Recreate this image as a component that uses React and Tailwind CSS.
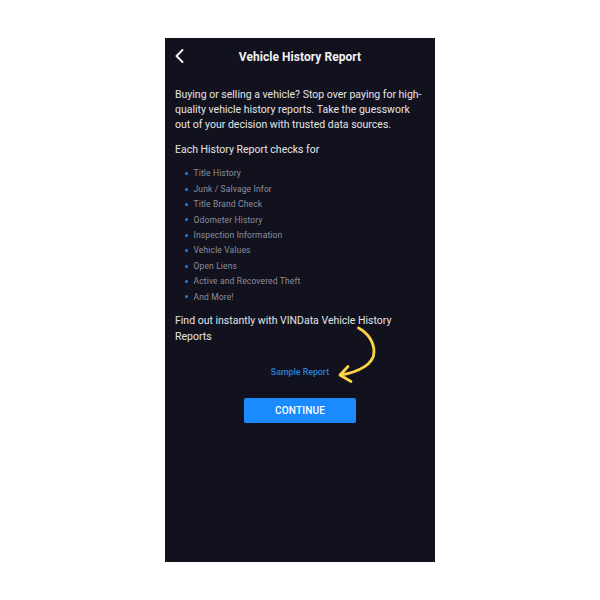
const items = [
  "Title History",
  "Junk / Salvage Infor",
  "Title Brand Check",
  "Odometer History",
  "Inspection Information",
  "Vehicle Values",
  "Open Liens",
  "Active and Recovered Theft",
  "And More!",
];

function App() {
  return (
    <div className="w-[600px] h-[600px] bg-white flex justify-center pt-[38px] font-['Roboto',sans-serif]">
      <div className="relative w-[270px] h-[524px] bg-[#12121f] flex flex-col">

        {/* Header */}
        <div className="relative h-[36px] flex items-center justify-center">
          <svg className="absolute left-[8px] top-[10px]" width="12" height="16" viewBox="0 0 12 16" fill="none">
            <path d="M9.5 2 L3.5 8 L9.5 14" stroke="#f2f2f2" strokeWidth="2" strokeLinecap="round" strokeLinejoin="round" />
          </svg>
          <h1 className="mt-[1px] text-[12px] font-bold text-[#f1f1f3] tracking-[0.05px]">Vehicle History Report</h1>
        </div>

        {/* Intro */}
        <p className="mt-[13px] px-[10px] text-[10.5px] leading-[15.2px] text-[#e4e4e6]">
          Buying or selling a vehicle? Stop over paying for high-quality vehicle history reports. Take the guesswork out of your decision with trusted data sources.
        </p>
        <p className="mt-[9.6px] px-[10px] text-[10.5px] leading-[15.4px] text-[#e4e4e6]">
          Each History Report checks for
        </p>

        {/* Checks */}
        <ul className="mt-[8.5px] pl-[20px] flex flex-col">
          {items.map((item) => (
            <li key={item} className="h-[15.4px] flex items-center text-[8.5px] text-[#8d8e9b] tracking-[0.14px]">
              <span className="w-[3px] h-[3px] rounded-full bg-[#1f7fe0] mr-[5.5px]"></span>
              {item}
            </li>
          ))}
        </ul>

        <p className="mt-[8.5px] px-[10px] text-[10.5px] leading-[15.7px] text-[#e4e4e6]">
          Find out instantly with VINData Vehicle History Reports
        </p>

        {/* Sample link */}
        <div className="mt-[21px] flex justify-center">
          <a className="text-[8.8px] leading-[12px] font-medium text-[#2a7fdc]">Sample Report</a>
        </div>

        <div className="mt-[20px] flex justify-center">
          <button className="w-[112px] h-[25px] rounded-[2px] bg-[#1a8aff] text-white text-[10px] font-medium tracking-[0.2px]">
            CONTINUE
          </button>
        </div>

        {/* Yellow arrow */}
        <svg className="absolute left-[170px] top-[288px]" width="45" height="60" viewBox="0 0 45 60" fill="none">
          <path d="M23.5 2 C33 7 39 16 39 26 C39 38 24 46 5.5 49" stroke="#fdd443" strokeWidth="2.8" strokeLinecap="round" />
          <path d="M13 40.5 L5 49 L16 55.5" stroke="#fdd443" strokeWidth="2.8" strokeLinecap="round" strokeLinejoin="round" />
        </svg>
      </div>
    </div>
  );
}

export default App;
